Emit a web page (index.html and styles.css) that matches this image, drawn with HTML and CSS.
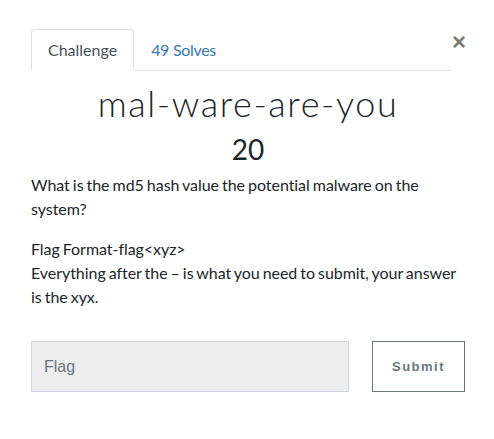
FILE: index.html
```html
<!DOCTYPE html>
<html lang="en">
<head>
    <meta charset="UTF-8">
    <meta name="viewport" content="width=device-width, initial-scale=1.0">
    <title>mal-ware-are-you</title>
    <link rel="stylesheet" href="styles.css">
</head>
<body>
    <div class="modal-body">
        <div class="modal-head">
            <ul class="nav-tabs">
                <li class="tab active"><a href="#challenge">Challenge</a></li>
                <li class="tab"><a href="#solves">49 Solves</a></li>
            </ul>
            <button class="close" type="button" aria-label="Close">&times;</button>
        </div>

        <h2 class="challenge-name">mal-ware-are-you</h2>
        <h3 class="challenge-value">20</h3>

        <div class="challenge-desc">
            <p>What is the md5 hash value the potential malware on the system?</p>
            <p>Flag Format-flag&lt;xyz&gt;<br>
            Everything after the – is what you need to submit, your answer is the xyx.</p>
        </div>

        <form class="submit-row">
            <input type="text" class="flag-input" placeholder="Flag">
            <button type="submit" class="submit-btn">Submit</button>
        </form>
    </div>
</body>
</html>
```

FILE: styles.css
```css
body {
    margin: 0;
    background-color: #ffffff;
    font-family: Lato, "Open Sans", sans-serif;
    color: #212529;
}

.modal-body {
    width: 434px;
    margin: 29px 0 0 31px;
}

.modal-head {
    display: flex;
}

.nav-tabs {
    display: flex;
    list-style: none;
    margin: 0;
    padding: 0;
    width: 420px;
    border-bottom: 1px solid #dee2e6;
}

.tab {
    margin-bottom: -1px;
}

.tab a {
    display: block;
    padding: 8px 16px;
    font-size: 16px;
    line-height: 24px;
    letter-spacing: -0.3px;
    color: #337ab7;
    text-decoration: none;
    border: 1px solid transparent;
    border-radius: 4px 4px 0 0;
}

.tab.active a {
    color: #495057;
    letter-spacing: 0;
    border-color: #dee2e6 #dee2e6 #ffffff;
}

.close {
    margin: 0 0 0 1px;
    padding: 0;
    width: 13px;
    height: 26px;
    border: none;
    background: none;
    font-family: "Liberation Sans", Arial, sans-serif;
    font-size: 24px;
    font-weight: bold;
    line-height: 26px;
    color: #7a7a7a;
    cursor: pointer;
}

.challenge-name {
    margin: 11px 0 0;
    text-align: center;
    font-size: 36px;
    font-weight: 300;
    letter-spacing: 1.6px;
    line-height: 43px;
}

.challenge-value {
    margin: 7px 0 0;
    text-align: center;
    font-size: 28px;
    font-weight: 400;
    line-height: 35px;
}

.challenge-desc {
    margin-top: 6px;
    font-size: 16px;
    line-height: 24px;
    word-spacing: -1px;
    letter-spacing: -0.05px;
}

.challenge-desc p {
    margin: 0 0 16px;
}

.submit-row {
    display: flex;
    justify-content: space-between;
    margin-top: 32px;
}

.flag-input {
    width: 318px;
    height: 51px;
    box-sizing: border-box;
    padding: 0 12px;
    background-color: #eeeeee;
    border: 1px solid #ced4da;
    font-family: "Liberation Sans", Arial, sans-serif;
    font-size: 16px;
    color: #495057;
}

.flag-input::placeholder {
    color: #6c757d;
}

.submit-btn {
    width: 93px;
    height: 51px;
    background-color: #ffffff;
    border: 1px solid #6c757d;
    font-family: "Liberation Sans", Arial, sans-serif;
    font-size: 13px;
    font-weight: bold;
    letter-spacing: 1.5px;
    color: #6c757d;
    cursor: pointer;
}
```
